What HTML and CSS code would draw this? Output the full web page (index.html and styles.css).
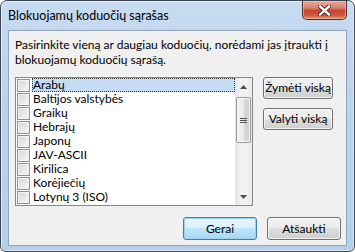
FILE: index.html
```html
<!DOCTYPE html>
<html lang="lt">
<head>
    <meta charset="UTF-8">
    <title>Blokuojamų koduočių sąrašas</title>
    <link rel="stylesheet" href="styles.css">
</head>
<body>
    <div class="window">
        <div class="titlebar">
            <span class="title">Blokuojamų koduočių sąrašas</span>
            <button class="close-btn" aria-label="Uždaryti">
                <svg width="13" height="11" viewBox="0 0 13 11">
                    <path d="M2 1.5 L11 9.5 M11 1.5 L2 9.5" stroke="#4a1a12" stroke-width="4.2" stroke-linecap="square"/>
                    <path d="M2 1.5 L11 9.5 M11 1.5 L2 9.5" stroke="#ffffff" stroke-width="2.4" stroke-linecap="square"/>
                </svg>
            </button>
        </div>

        <div class="client">
            <p class="intro">Pasirinkite vieną ar daugiau koduočių, norėdami jas įtraukti į<br>blokuojamų koduočių sąrašą.</p>

            <div class="main">
                <div class="listbox">
                    <ul class="items">
                        <li class="item selected"><span class="check"></span><span class="label">Arabų</span></li>
                        <li class="item"><span class="check"></span><span class="label">Baltijos valstybės</span></li>
                        <li class="item"><span class="check"></span><span class="label">Graikų</span></li>
                        <li class="item"><span class="check"></span><span class="label">Hebrajų</span></li>
                        <li class="item"><span class="check"></span><span class="label">Japonų</span></li>
                        <li class="item"><span class="check"></span><span class="label">JAV-ASCII</span></li>
                        <li class="item"><span class="check"></span><span class="label">Kirilica</span></li>
                        <li class="item"><span class="check"></span><span class="label">Korėjiečių</span></li>
                        <li class="item"><span class="check"></span><span class="label">Lotynų 3 (ISO)</span></li>
                    </ul>
                    <div class="scrollbar">
                        <div class="arrow">
                            <svg width="7" height="4" viewBox="0 0 7 4"><path d="M0 4 L3.5 0 L7 4 Z" fill="#4d4d4d"/></svg>
                        </div>
                        <div class="track">
                            <div class="thumb"><span class="grip"></span></div>
                        </div>
                        <div class="arrow">
                            <svg width="7" height="4" viewBox="0 0 7 4"><path d="M0 0 L3.5 4 L7 0 Z" fill="#4d4d4d"/></svg>
                        </div>
                    </div>
                </div>

                <div class="side-buttons">
                    <button class="btn">Žymėti viską</button>
                    <button class="btn">Valyti viską</button>
                </div>
            </div>

            <div class="footer">
                <button class="btn default">Gerai</button>
                <button class="btn">Atšaukti</button>
            </div>
        </div>
    </div>
</body>
</html>
```

FILE: styles.css
```css
* {
    margin: 0;
    padding: 0;
    box-sizing: border-box;
}

body {
    font-family: 'Lato', 'Liberation Sans', sans-serif;
    font-size: 12px;
    color: #000;
    background: #fff;
    width: 355px;
    height: 252px;
}

.window {
    width: 355px;
    height: 252px;
    border: 1px solid #3c4654;
    border-radius: 7px 7px 6px 6px;
    background: linear-gradient(180deg, #c7dbf1 0%, #bcd3ec 40%, #b6cfe9 100%);
    box-shadow: inset 0 0 0 1px rgba(255, 255, 255, 0.55);
    overflow: hidden;
}

.titlebar {
    height: 29px;
    display: flex;
    align-items: flex-start;
}

.title {
    padding: 7px 0 0 7px;
    font-size: 12.5px;
    line-height: 15px;
    color: #000;
    white-space: nowrap;
}

.close-btn {
    margin-left: auto;
    margin-right: 7px;
    width: 45px;
    height: 19px;
    border: 1px solid #5a2a22;
    border-top: none;
    border-radius: 0 0 5px 5px;
    background: linear-gradient(180deg, #e9a99a 0%, #d9806c 40%, #c5452e 52%, #cf5a3e 80%, #e4926f 100%);
    box-shadow: inset 0 0 0 1px rgba(255, 220, 210, 0.45);
    display: flex;
    align-items: center;
    justify-content: center;
}

.client {
    margin: 0 7px;
    height: 216px;
    border: 1px solid #8fa4bd;
    background: #f0f0f0;
    padding: 6px 5px 0 6px;
    display: flex;
    flex-direction: column;
}

.intro {
    line-height: 15px;
    height: 40px;
    white-space: nowrap;
}

.main {
    display: flex;
    align-items: flex-start;
    gap: 10px;
}

.listbox {
    width: 238px;
    height: 129px;
    border: 1px solid #828790;
    background: #fff;
    display: flex;
}

.items {
    list-style: none;
    flex: 1;
}

.item {
    height: 14px;
    display: flex;
    align-items: center;
    padding-left: 1px;
    line-height: 14px;
    white-space: nowrap;
}

.check {
    width: 13px;
    height: 13px;
    border: 1px solid #8e8f8f;
    background: linear-gradient(135deg, #d2d4d6 0%, #e6e7e8 50%, #f5f5f5 100%);
    box-shadow: inset 0 0 0 1px #f4f4f4;
    margin-right: 2px;
    flex-shrink: 0;
}

.label {
    flex: 1;
    height: 14px;
    padding-left: 1px;
}

.item.selected .label {
    background: #c6dcf4;
    outline: 1px dotted #333;
    outline-offset: -1px;
}

.scrollbar {
    width: 17px;
    display: flex;
    flex-direction: column;
    background: linear-gradient(90deg, #e3e3e3 0%, #f1f1f1 30%, #f1f1f1 70%, #e8e8e8 100%);
}

.arrow {
    height: 17px;
    display: flex;
    align-items: center;
    justify-content: center;
}

.track {
    flex: 1;
    padding: 2px 1px 0 1px;
}

.thumb {
    height: 46px;
    border: 1px solid #979797;
    border-radius: 2px;
    background: linear-gradient(90deg, #f3f3f3 0%, #e9e9e9 50%, #d8d8d8 51%, #cfcfcf 100%);
    box-shadow: inset 0 0 0 1px #f8f8f8;
    display: flex;
    align-items: center;
    justify-content: center;
}

.grip {
    width: 7px;
    height: 5px;
    border-top: 1px solid #555;
    border-bottom: 1px solid #555;
    background: linear-gradient(180deg, transparent 1px, #555 1px, #555 2px, transparent 2px);
}

.side-buttons {
    display: flex;
    flex-direction: column;
    gap: 9px;
}

.btn {
    font-family: 'Lato', 'Liberation Sans', sans-serif;
    font-size: 12px;
    color: #000;
    height: 22px;
    width: 70px;
    border: 1px solid #707070;
    border-radius: 3px;
    background: linear-gradient(180deg, #f2f2f2 0%, #ebebeb 48%, #dddddd 50%, #cfcfcf 100%);
    box-shadow: inset 0 0 0 1px rgba(255, 255, 255, 0.7);
    line-height: 18px;
    white-space: nowrap;
}

.footer {
    display: flex;
    justify-content: flex-end;
    gap: 10px;
    margin-top: 11px;
}

.footer .btn {
    width: 74px;
    height: 23px;
}

.btn.default {
    border-color: #3c7fb1;
    background: linear-gradient(180deg, #eaf6fd 0%, #d9f0fc 48%, #bee6fd 50%, #a7d9f5 100%);
    box-shadow: inset 0 0 0 1px #9fd0ee;
}
```
